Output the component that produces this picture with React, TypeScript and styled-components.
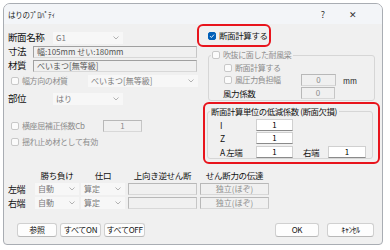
import React from "react";
import styled, { createGlobalStyle } from "styled-components";

const Global = createGlobalStyle`
  html, body { margin: 0; padding: 0; background: #ffffff; }
  body {
    width: 390px; height: 250px; overflow: hidden;
    font-family: "Noto Sans CJK JP", "Noto Sans", sans-serif;
    color: #1a1a1a;
  }
  * { box-sizing: border-box; }
`;

const Page = styled.div`
  padding: 3px 0 0 3px;
`;

const Window = styled.div`
  width: 380px;
  height: 242px;
  border: 1px solid #a9adb3;
  border-radius: 7px 7px 4px 4px;
  background: #f0f0f0;
  overflow: hidden;
  display: flex;
  flex-direction: column;
`;

const TitleBar = styled.div`
  height: 20px;
  background: #f3f5f8;
  display: flex;
  align-items: center;
  padding-left: 4px;
  font-size: 7.5px;
  color: #222;
`;

const TitleText = styled.span`
  flex: 1;
  letter-spacing: -0.2px;
`;

const TitleButton = styled.span<{ $w: number }>`
  width: ${(p) => p.$w}px;
  text-align: center;
  font-size: 9px;
  color: #333;
`;

const Client = styled.div`
  flex: 1;
  display: flex;
  flex-direction: column;
`;

const Top = styled.div`
  display: grid;
  grid-template-columns: 193px 1fr;
  height: 140px;
`;

const LeftCol = styled.div`
  padding-left: 4px;
  display: flex;
  flex-direction: column;
`;

const Row = styled.div<{ $mt?: number; $h?: number }>`
  display: flex;
  align-items: center;
  height: ${(p) => p.$h ?? 14}px;
  margin-top: ${(p) => p.$mt ?? 0}px;
`;

const Label = styled.span<{ $w?: number; $size?: number; $muted?: boolean }>`
  display: inline-block;
  width: ${(p) => (p.$w ? `${p.$w}px` : "auto")};
  flex: none;
  font-size: ${(p) => p.$size ?? 9.5}px;
  letter-spacing: -0.4px;
  color: ${(p) => (p.$muted ? "#8c8c8c" : "#111")};
  white-space: nowrap;
  line-height: 1;
`;

const Combo = styled.div<{ $w: number }>`
  width: ${(p) => p.$w}px;
  height: 12px;
  flex: none;
  background: #f7f7f7;
  display: flex;
  align-items: center;
  justify-content: space-between;
  padding: 0 4px 0 3px;
  font-size: 8px;
  color: #7a7a7a;
  line-height: 1;
`;

const Chevron = () => (
  <svg width="6" height="4" viewBox="0 0 6 4">
    <path d="M0.5 0.5 L3 3 L5.5 0.5" fill="none" stroke="#a0a0a0" strokeWidth="0.8" />
  </svg>
);

const Field = styled.div<{ $w: number; $kind?: "ro" | "dis" | "white"; $align?: "left" | "center" }>`
  width: ${(p) => p.$w}px;
  height: 12px;
  flex: none;
  display: flex;
  align-items: center;
  justify-content: ${(p) => (p.$align === "left" ? "flex-start" : "center")};
  padding: 0 3px;
  font-size: 8px;
  line-height: 1;
  white-space: nowrap;
  overflow: hidden;
  background: ${(p) => (p.$kind === "white" ? "#ffffff" : "#f0f0f0")};
  border: 1px solid ${(p) => (p.$kind === "white" ? "#d0d0d0" : "#c6c6c6")};
  border-top-color: ${(p) => (p.$kind === "ro" ? "#a0a0a0" : p.$kind === "white" ? "#d0d0d0" : "#b8b8b8")};
  border-left-color: ${(p) => (p.$kind === "ro" ? "#a0a0a0" : p.$kind === "white" ? "#d0d0d0" : "#b8b8b8")};
  border-bottom-color: ${(p) => (p.$kind === "white" ? "#8a8a8a" : "#d8d8d8")};
  color: ${(p) => (p.$kind === "ro" ? "#555" : p.$kind === "white" ? "#000" : "#8c8c8c")};
`;

const Box = styled.span<{ $checked?: boolean; $dis?: boolean }>`
  width: 8px;
  height: 8px;
  flex: none;
  border-radius: 2px;
  border: 1px solid ${(p) => (p.$checked ? "#005fb8" : p.$dis ? "#c8c8c8" : "#8a8a8a")};
  background: ${(p) => (p.$checked ? "#005fb8" : "#fbfbfb")};
  display: inline-flex;
  align-items: center;
  justify-content: center;
  margin-right: 3px;
`;

const Check = ({ checked, dis }: { checked?: boolean; dis?: boolean }) => (
  <Box $checked={checked} $dis={dis}>
    {checked && (
      <svg width="6" height="6" viewBox="0 0 6 6">
        <path d="M1 3.1 L2.4 4.5 L5 1.6" fill="none" stroke="#fff" strokeWidth="0.9" />
      </svg>
    )}
  </Box>
);

const RightCol = styled.div`
  display: flex;
  flex-direction: column;
`;

const RedBox = styled.div<{ $w: number; $h: number; $ml?: number; $mt?: number }>`
  width: ${(p) => p.$w}px;
  height: ${(p) => p.$h}px;
  margin-left: ${(p) => p.$ml ?? 0}px;
  margin-top: ${(p) => p.$mt ?? 0}px;
  border: 2px solid #e8141c;
  border-radius: 6px;
`;

const RedCheckRow = styled(RedBox)`
  display: flex;
  align-items: center;
  padding-left: 9px;
`;

const Group = styled.fieldset<{ $w: number; $h: number; $ml?: number; $mt?: number }>`
  width: ${(p) => p.$w}px;
  height: ${(p) => p.$h}px;
  margin: ${(p) => p.$mt ?? 0}px 0 0 ${(p) => p.$ml ?? 0}px;
  padding: 0;
  border: 1px solid #d6d6d6;
  border-radius: 3px;
  min-width: 0;
`;

const Legend = styled.legend`
  margin-left: 2px;
  padding: 0 2px 0 1px;
  height: 12px;
  display: flex;
  align-items: center;
  font-size: 8px;
  line-height: 1;
  letter-spacing: -0.3px;
  white-space: nowrap;
`;

const GroupRow = styled.div<{ $mt?: number; $pl?: number }>`
  display: flex;
  align-items: center;
  height: 12px;
  margin-top: ${(p) => p.$mt ?? 0}px;
  padding-left: ${(p) => p.$pl ?? 0}px;
`;

const Unit = styled.span`
  font-size: 7.5px;
  margin-left: 7px;
  color: #222;
`;

const Bottom = styled.div`
  display: flex;
  flex-direction: column;
  padding-left: 4px;
`;

const Table = styled.div`
  display: grid;
  grid-template-columns: 27px 46px 47px 72px 69px;
  grid-auto-rows: 12px;
  row-gap: 2px;
  align-items: center;
  margin-top: 5px;
`;

const Header = styled.span<{ $w: number }>`
  width: ${(p) => p.$w}px;
  text-align: center;
  font-size: 8.5px;
  letter-spacing: -0.3px;
  line-height: 1;
  color: #111;
  white-space: nowrap;
`;

const Buttons = styled.div`
  display: flex;
  align-items: center;
  margin-top: 14px;
  padding-left: 9px;
  padding-right: 8px;
`;

const BtnGroup = styled.div<{ $gap: number }>`
  display: flex;
  gap: ${(p) => p.$gap}px;
`;

const Spacer = styled.div`
  flex: 1;
`;

const Button = styled.div<{ $w: number }>`
  width: ${(p) => p.$w}px;
  height: 14px;
  background: #fdfdfd;
  border: 1px solid #d0d0d0;
  border-bottom-color: #b8b8b8;
  border-radius: 3px;
  display: flex;
  align-items: center;
  justify-content: center;
  font-size: 8px;
  letter-spacing: -0.3px;
  line-height: 1;
  color: #111;
`;

export default function App() {
  return (
    <>
      <Global />
      <Page>
        <Window>
          <TitleBar>
            <TitleText>はりのﾌﾟﾛﾊﾟﾃｨ</TitleText>
            <TitleButton $w={30}>?</TitleButton>
            <TitleButton $w={30}>✕</TitleButton>
            <TitleButton $w={14}></TitleButton>
          </TitleBar>
          <Client>
            <Top>
              <LeftCol>
                <Row $mt={7}>
                  <Label $w={45}>断面名称</Label>
                  <Combo $w={70}>
                    <span>G1</span>
                    <Chevron />
                  </Combo>
                </Row>
                <Row>
                  <Label $w={25}>寸法</Label>
                  <Field $w={164} $kind="ro" $align="left">幅:105mm せい:180mm</Field>
                </Row>
                <Row>
                  <Label $w={25}>材質</Label>
                  <Field $w={164} $kind="ro" $align="left">べいまつ[無等級]</Field>
                </Row>
                <Row $mt={1}>
                  <Box $dis style={{ marginLeft: 3 }} />
                  <Label $w={66} $size={8} $muted>幅方向の材質</Label>
                  <Combo $w={110}>
                    <span>べいまつ[無等級]</span>
                    <Chevron />
                  </Combo>
                </Row>
                <Row $mt={4}>
                  <Label $w={45}>部位</Label>
                  <Combo $w={70}>
                    <span>はり</span>
                    <Chevron />
                  </Combo>
                </Row>
                <Row $mt={13}>
                  <Box $dis style={{ marginLeft: 3 }} />
                  <Label $w={81} $size={8} $muted>横座屈補正係数Cb</Label>
                  <Field $w={39} $kind="dis">1</Field>
                </Row>
                <Row $mt={2}>
                  <Box $dis style={{ marginLeft: 3 }} />
                  <Label $size={8} $muted>揺れ止め材として有効</Label>
                </Row>
              </LeftCol>
              <RightCol>
                <RedCheckRow $w={74} $h={23}>
                  <Check checked />
                  <Label $size={8.5}>断面計算する</Label>
                </RedCheckRow>
                <Group $w={167} $h={52} $ml={11} $mt={2}>
                  <Legend>
                    <Check dis />
                    <Label $size={8} $muted>吹抜に面した耐風梁</Label>
                  </Legend>
                  <GroupRow $mt={1} $pl={15}>
                    <Check dis />
                    <Label $size={8} $muted>断面計算する</Label>
                  </GroupRow>
                  <GroupRow $pl={15}>
                    <Check dis />
                    <Label $w={66} $size={8} $muted>風圧力負担幅</Label>
                    <Field $w={35} $kind="dis">0</Field>
                    <Unit>mm</Unit>
                  </GroupRow>
                  <GroupRow $mt={1} $pl={14}>
                    <Label $w={78} $size={8.5}>風力係数</Label>
                    <Field $w={34} $kind="dis">0</Field>
                  </GroupRow>
                </Group>
                <RedBox $w={177} $h={62} $ml={6} $mt={1}>
                  <Group $w={166} $h={54} $ml={2} $mt={1}>
                    <Legend>
                      <Label $size={8.4}>断面計算単位の低減係数 (断面欠損)</Label>
                    </Legend>
                    <GroupRow $mt={2} $pl={12}>
                      <Label $w={36} $size={8.5}>I</Label>
                      <Field $w={37} $kind="white">1</Field>
                    </GroupRow>
                    <GroupRow $mt={1} $pl={12}>
                      <Label $w={36} $size={8.5}>Z</Label>
                      <Field $w={37} $kind="white">1</Field>
                    </GroupRow>
                    <GroupRow $mt={2} $pl={12}>
                      <Label $w={36} $size={8.5}>A 左端</Label>
                      <Field $w={37} $kind="white">1</Field>
                      <Label $w={25} $size={8.5} style={{ marginLeft: 10 }}>右端</Label>
                      <Field $w={38} $kind="white">1</Field>
                    </GroupRow>
                  </Group>
                </RedBox>
              </RightCol>
            </Top>
            <Bottom>
              <Table>
                <span />
                <Header $w={44}>勝ち負け</Header>
                <Header $w={44}>仕口</Header>
                <Header $w={69}>上向き逆せん断</Header>
                <Header $w={69}>せん断力の伝達</Header>

                <Label $size={9}>左端</Label>
                <Combo $w={44}><span>自動</span><Chevron /></Combo>
                <Combo $w={44}><span>算定</span><Chevron /></Combo>
                <Field $w={69} $kind="dis" />
                <Field $w={69} $kind="dis">独立(ほぞ)</Field>

                <Label $size={9}>右端</Label>
                <Combo $w={44}><span>自動</span><Chevron /></Combo>
                <Combo $w={44}><span>算定</span><Chevron /></Combo>
                <Field $w={69} $kind="dis" />
                <Field $w={69} $kind="dis">独立(ほぞ)</Field>
              </Table>
              <Buttons>
                <BtnGroup $gap={3}>
                  <Button $w={40}>参照</Button>
                  <Button $w={41}>すべてON</Button>
                  <Button $w={41}>すべてOFF</Button>
                </BtnGroup>
                <Spacer />
                <BtnGroup $gap={8}>
                  <Button $w={44}>OK</Button>
                  <Button $w={47}>ｷｬﾝｾﾙ</Button>
                </BtnGroup>
              </Buttons>
            </Bottom>
          </Client>
        </Window>
      </Page>
    </>
  );
}
